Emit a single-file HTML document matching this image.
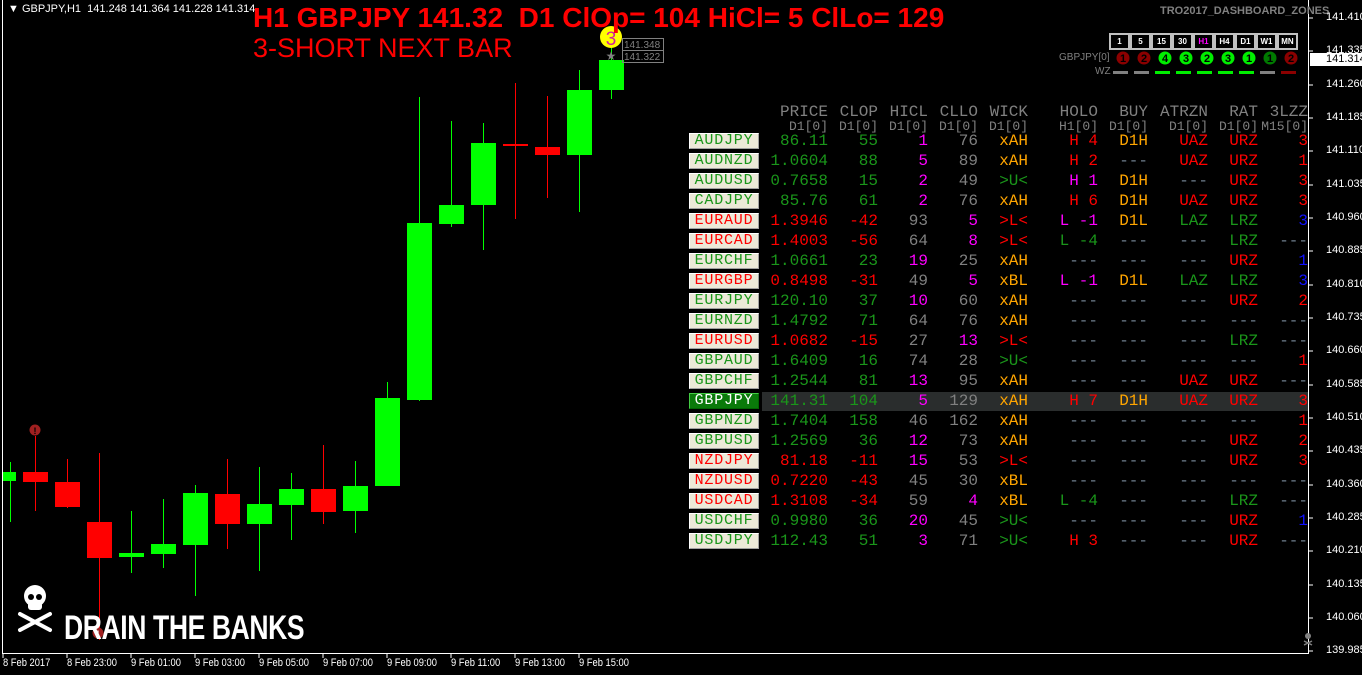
<!DOCTYPE html>
<html><head><meta charset="utf-8"><style>
body{margin:0;background:#000;width:1362px;height:675px;overflow:hidden;position:relative;font-family:"Liberation Sans",sans-serif}
.a{position:absolute;white-space:pre}
.row{position:absolute;left:762px;width:546px;height:20px;font-family:"Liberation Mono",monospace;font-size:16px;line-height:20px}
.row span{position:absolute;top:0;text-align:right;white-space:pre}
.c1{left:0;width:66px}.c2{left:66px;width:50px}.c3{left:116px;width:50px}.c4{left:166px;width:50px}.c5{left:216px;width:50px}.c6{left:266px;width:70px}.c7{left:336px;width:50px}.c8{left:386px;width:60px}.c9{left:446px;width:50px}.c10{left:496px;width:50px}
.btn{position:absolute;left:689px;width:70px;height:16px;background:#ece9d8;border-top:1px solid #fff;border-left:1px solid #fff;border-right:1px solid #a0a0a0;border-bottom:1px solid #a0a0a0;box-sizing:border-box;font-family:"Liberation Mono",monospace;font-size:15px;line-height:14px;text-align:center;letter-spacing:0.8px}
.g{color:#1a961a}.r{color:#ff0000}.m{color:#ff00ff}.k{color:#808080}.o{color:#ffa500}.d{color:#708090}.b{color:#1010ff}
.hd{color:#808080}
.tf{position:absolute;top:33px;width:17px;height:13px;border:2px solid #c0c0c0;background:#000;color:#fff;font-size:8px;font-weight:bold;text-align:center;line-height:13px;box-sizing:content-box}
.ax{position:absolute;left:1326px;font-size:11px;color:#fff;font-family:"Liberation Sans",sans-serif}
.tx{position:absolute;top:657px;font-size:11px;color:#fff;transform:scaleX(0.85);transform-origin:left}
</style></head><body>
<svg class="a" style="left:0;top:0" width="1362" height="675">
<line x1="2.5" y1="0" x2="2.5" y2="653" stroke="#fff"/>
<line x1="2" y1="653.5" x2="1309" y2="653.5" stroke="#fff"/>
<line x1="1308.5" y1="0" x2="1308.5" y2="654" stroke="#fff"/>
<g stroke-width="1">
<line x1="10.5" y1="462" x2="10.5" y2="522" stroke="#0f0"/><rect x="3" y="472" width="13" height="9" fill="#0f0"/>
<line x1="35.5" y1="436" x2="35.5" y2="511" stroke="#f00"/><rect x="23" y="472" width="25" height="10" fill="#f00"/>
<line x1="67.5" y1="459" x2="67.5" y2="508" stroke="#f00"/><rect x="55" y="482" width="25" height="25" fill="#f00"/>
<line x1="99.5" y1="453" x2="99.5" y2="640" stroke="#f00"/><rect x="87" y="522" width="25" height="36" fill="#f00"/>
<line x1="131.5" y1="511" x2="131.5" y2="573" stroke="#0f0"/><rect x="119" y="553" width="25" height="4" fill="#0f0"/>
<line x1="163.5" y1="499" x2="163.5" y2="568" stroke="#0f0"/><rect x="151" y="544" width="25" height="10" fill="#0f0"/>
<line x1="195.5" y1="485" x2="195.5" y2="596" stroke="#0f0"/><rect x="183" y="493" width="25" height="52" fill="#0f0"/>
<line x1="227.5" y1="459" x2="227.5" y2="549" stroke="#f00"/><rect x="215" y="494" width="25" height="30" fill="#f00"/>
<line x1="259.5" y1="467" x2="259.5" y2="571" stroke="#0f0"/><rect x="247" y="504" width="25" height="20" fill="#0f0"/>
<line x1="291.5" y1="473" x2="291.5" y2="540" stroke="#0f0"/><rect x="279" y="489" width="25" height="16" fill="#0f0"/>
<line x1="323.5" y1="445" x2="323.5" y2="524" stroke="#f00"/><rect x="311" y="489" width="25" height="23" fill="#f00"/>
<line x1="355.5" y1="461" x2="355.5" y2="533" stroke="#0f0"/><rect x="343" y="486" width="25" height="25" fill="#0f0"/>
<line x1="387.5" y1="382" x2="387.5" y2="486" stroke="#0f0"/><rect x="375" y="398" width="25" height="88" fill="#0f0"/>
<line x1="419.5" y1="97" x2="419.5" y2="401" stroke="#0f0"/><rect x="407" y="223" width="25" height="177" fill="#0f0"/>
<line x1="451.5" y1="121" x2="451.5" y2="227" stroke="#0f0"/><rect x="439" y="205" width="25" height="19" fill="#0f0"/>
<line x1="483.5" y1="123" x2="483.5" y2="250" stroke="#0f0"/><rect x="471" y="143" width="25" height="62" fill="#0f0"/>
<line x1="515.5" y1="83" x2="515.5" y2="219" stroke="#f00"/><rect x="503" y="144" width="25" height="2" fill="#f00"/>
<line x1="547.5" y1="96" x2="547.5" y2="198" stroke="#f00"/><rect x="535" y="147" width="25" height="8" fill="#f00"/>
<line x1="579.5" y1="70" x2="579.5" y2="212" stroke="#0f0"/><rect x="567" y="90" width="25" height="65" fill="#0f0"/>
<line x1="611.5" y1="48" x2="611.5" y2="99" stroke="#0f0"/><rect x="599" y="60" width="25" height="30" fill="#0f0"/>
</g>
<circle cx="35" cy="430" r="5.5" fill="#a02020"/><text x="35" y="434" font-size="9" fill="#000" text-anchor="middle" font-weight="bold">!</text>
<circle cx="98" cy="633" r="5.5" fill="#a02020"/><text x="98" y="637" font-size="9" fill="#fff" text-anchor="middle">1</text>
<circle cx="611" cy="37" r="11" fill="#ffff00"/><text x="611" y="45" font-size="19" fill="#d020a0" text-anchor="middle">3</text>
<text x="611" y="60" font-size="12" fill="#808080" text-anchor="middle">★</text>
<rect x="622.5" y="38.5" width="41" height="12" fill="none" stroke="#808080"/><rect x="622.5" y="50.5" width="41" height="12" fill="none" stroke="#808080"/>
<text x="624" y="48" font-size="10" fill="#808080">141.348</text><text x="624" y="60" font-size="10" fill="#808080">141.322</text>
<g stroke="#fff">
<line x1="1309" y1="18" x2="1313" y2="18"/><line x1="1309" y1="51" x2="1313" y2="51"/><line x1="1309" y1="85" x2="1313" y2="85"/><line x1="1309" y1="118" x2="1313" y2="118"/><line x1="1309" y1="151" x2="1313" y2="151"/><line x1="1309" y1="185" x2="1313" y2="185"/><line x1="1309" y1="218" x2="1313" y2="218"/><line x1="1309" y1="251" x2="1313" y2="251"/><line x1="1309" y1="285" x2="1313" y2="285"/><line x1="1309" y1="318" x2="1313" y2="318"/><line x1="1309" y1="351" x2="1313" y2="351"/><line x1="1309" y1="385" x2="1313" y2="385"/><line x1="1309" y1="418" x2="1313" y2="418"/><line x1="1309" y1="451" x2="1313" y2="451"/><line x1="1309" y1="485" x2="1313" y2="485"/><line x1="1309" y1="518" x2="1313" y2="518"/><line x1="1309" y1="551" x2="1313" y2="551"/><line x1="1309" y1="585" x2="1313" y2="585"/><line x1="1309" y1="618" x2="1313" y2="618"/><line x1="1309" y1="651" x2="1313" y2="651"/>
<line x1="3" y1="654" x2="3" y2="658"/><line x1="67" y1="654" x2="67" y2="658"/><line x1="131" y1="654" x2="131" y2="658"/><line x1="195" y1="654" x2="195" y2="658"/><line x1="259" y1="654" x2="259" y2="658"/><line x1="323" y1="654" x2="323" y2="658"/><line x1="387" y1="654" x2="387" y2="658"/><line x1="451" y1="654" x2="451" y2="658"/><line x1="515" y1="654" x2="515" y2="658"/><line x1="579" y1="654" x2="579" y2="658"/>
</g>
<rect x="1310" y="53" width="52" height="13" fill="#fff"/>
<g fill="#fff">
<ellipse cx="35" cy="596" rx="11" ry="11"/><rect x="28" y="602" width="14" height="8" rx="3"/>
<g stroke="#fff" stroke-width="4" stroke-linecap="round"><line x1="20" y1="614" x2="50" y2="630"/><line x1="50" y1="614" x2="20" y2="630"/></g>
</g>
<circle cx="31" cy="597" r="3" fill="#000"/><circle cx="39" cy="597" r="3" fill="#000"/>
<circle cx="1308" cy="636" r="3" fill="#808080"/><path d="M1304 641 L1312 645 M1312 641 L1304 645" stroke="#808080" stroke-width="1.5"/>
<g font-size="11" text-anchor="middle" font-weight="bold">
<circle cx="1123" cy="58" r="6.5" fill="#8b0000"/><text x="1123" y="62" fill="#000">1</text>
<circle cx="1144" cy="58" r="6.5" fill="#8b0000"/><text x="1144" y="62" fill="#000">2</text>
<circle cx="1165" cy="58" r="6.5" fill="#00ee00"/><text x="1165" y="62" fill="#000">4</text>
<circle cx="1186" cy="58" r="6.5" fill="#00ee00"/><text x="1186" y="62" fill="#000">3</text>
<circle cx="1207" cy="58" r="6.5" fill="#00ee00"/><text x="1207" y="62" fill="#000">2</text>
<circle cx="1228" cy="58" r="6.5" fill="#00ee00"/><text x="1228" y="62" fill="#000">3</text>
<circle cx="1249" cy="58" r="6.5" fill="#00ee00"/><text x="1249" y="62" fill="#000">1</text>
<circle cx="1270" cy="58" r="6.5" fill="#007a00"/><text x="1270" y="62" fill="#000">1</text>
<circle cx="1291" cy="58" r="6.5" fill="#8b0000"/><text x="1291" y="62" fill="#000">2</text>
</g>
<g>
<rect x="1113" y="71" width="15" height="3" fill="#808080"/><rect x="1134" y="71" width="15" height="3" fill="#808080"/><rect x="1155" y="71" width="15" height="3" fill="#00ee00"/><rect x="1176" y="71" width="15" height="3" fill="#00ee00"/><rect x="1197" y="71" width="15" height="3" fill="#00ee00"/><rect x="1218" y="71" width="15" height="3" fill="#00ee00"/><rect x="1239" y="71" width="15" height="3" fill="#00ee00"/><rect x="1260" y="71" width="15" height="3" fill="#808080"/><rect x="1281" y="71" width="15" height="3" fill="#8b0000"/>
</g>
</svg>

<div class="a" style="left:8px;top:3px;font-size:11px;color:#fff">▼ GBPJPY,H1  141.248 141.364 141.228 141.314</div>
<div class="a" style="left:253px;top:2px;font-size:28px;font-weight:bold;color:#ff0000">H1 GBPJPY 141.32  D1 ClOp= 104 HiCl= 5 ClLo= 129</div>
<div class="a" style="left:253px;top:33px;font-size:27px;color:#ff0000">3-SHORT NEXT BAR</div>
<div class="a" style="left:64px;top:609px;font-size:34px;font-weight:bold;color:#fff;transform:scaleX(0.78);transform-origin:left;letter-spacing:-0.5px">DRAIN THE BANKS</div>
<div class="a" style="left:1160px;top:5px;font-size:11px;font-weight:bold;color:#808080">TRO2017_DASHBOARD_ZONES</div>
<div class="a" style="left:1059px;top:52px;font-size:10px;color:#808080">GBPJPY[0]</div>
<div class="a" style="left:1095px;top:66px;font-size:10px;color:#808080">WZ</div>

<div class="tf" style="left:1109px">1</div><div class="tf" style="left:1130px">5</div><div class="tf" style="left:1151px">15</div><div class="tf" style="left:1172px">30</div><div class="tf" style="left:1193px;color:#ff00ff">H1</div><div class="tf" style="left:1214px">H4</div><div class="tf" style="left:1235px">D1</div><div class="tf" style="left:1256px">W1</div><div class="tf" style="left:1277px">MN</div>

<div class="ax" style="top:11px">141.410</div><div class="ax" style="top:44px">141.335</div><div class="ax" style="top:53px;color:#000">141.314</div><div class="ax" style="top:78px">141.260</div><div class="ax" style="top:111px">141.185</div><div class="ax" style="top:144px">141.110</div><div class="ax" style="top:178px">141.035</div><div class="ax" style="top:211px">140.960</div><div class="ax" style="top:244px">140.885</div><div class="ax" style="top:278px">140.810</div><div class="ax" style="top:311px">140.735</div><div class="ax" style="top:344px">140.660</div><div class="ax" style="top:378px">140.585</div><div class="ax" style="top:411px">140.510</div><div class="ax" style="top:444px">140.435</div><div class="ax" style="top:478px">140.360</div><div class="ax" style="top:511px">140.285</div><div class="ax" style="top:544px">140.210</div><div class="ax" style="top:578px">140.135</div><div class="ax" style="top:611px">140.060</div><div class="ax" style="top:644px">139.985</div>

<div class="tx" style="left:3px">8 Feb 2017</div><div class="tx" style="left:67px">8 Feb 23:00</div><div class="tx" style="left:131px">9 Feb 01:00</div><div class="tx" style="left:195px">9 Feb 03:00</div><div class="tx" style="left:259px">9 Feb 05:00</div><div class="tx" style="left:323px">9 Feb 07:00</div><div class="tx" style="left:387px">9 Feb 09:00</div><div class="tx" style="left:451px">9 Feb 11:00</div><div class="tx" style="left:515px">9 Feb 13:00</div><div class="tx" style="left:579px">9 Feb 15:00</div>

<div class="row hd" style="top:102px"><span class="c1">PRICE</span><span class="c2">CLOP</span><span class="c3">HICL</span><span class="c4">CLLO</span><span class="c5">WICK</span><span class="c6">HOLO</span><span class="c7">BUY</span><span class="c8">ATRZN</span><span class="c9">RAT</span><span class="c10">3LZZ</span></div>
<div class="row hd" style="top:117px;font-size:13px"><span class="c1">D1[0]</span><span class="c2">D1[0]</span><span class="c3">D1[0]</span><span class="c4">D1[0]</span><span class="c5">D1[0]</span><span class="c6">H1[0]</span><span class="c7">D1[0]</span><span class="c8">D1[0]</span><span class="c9">D1[0]</span><span class="c10">M15[0]</span></div>

<div style="position:absolute;left:762px;top:392px;width:546px;height:19px;background:#2a2d2d"></div>

<div class="btn g" style="top:133px">AUDJPY</div><div class="row" style="top:131px"><span class="c1 g">86.11</span><span class="c2 g">55</span><span class="c3 m">1</span><span class="c4 k">76</span><span class="c5 o">xAH</span><span class="c6 r">H 4</span><span class="c7 o">D1H</span><span class="c8 r">UAZ</span><span class="c9 r">URZ</span><span class="c10 r">3</span></div>
<div class="btn g" style="top:153px">AUDNZD</div><div class="row" style="top:151px"><span class="c1 g">1.0604</span><span class="c2 g">88</span><span class="c3 m">5</span><span class="c4 k">89</span><span class="c5 o">xAH</span><span class="c6 r">H 2</span><span class="c7 d">---</span><span class="c8 r">UAZ</span><span class="c9 r">URZ</span><span class="c10 r">1</span></div>
<div class="btn g" style="top:173px">AUDUSD</div><div class="row" style="top:171px"><span class="c1 g">0.7658</span><span class="c2 g">15</span><span class="c3 m">2</span><span class="c4 k">49</span><span class="c5 g">&gt;U&lt;</span><span class="c6 m">H 1</span><span class="c7 o">D1H</span><span class="c8 d">---</span><span class="c9 r">URZ</span><span class="c10 r">3</span></div>
<div class="btn g" style="top:193px">CADJPY</div><div class="row" style="top:191px"><span class="c1 g">85.76</span><span class="c2 g">61</span><span class="c3 m">2</span><span class="c4 k">76</span><span class="c5 o">xAH</span><span class="c6 r">H 6</span><span class="c7 o">D1H</span><span class="c8 r">UAZ</span><span class="c9 r">URZ</span><span class="c10 r">3</span></div>
<div class="btn r" style="top:213px">EURAUD</div><div class="row" style="top:211px"><span class="c1 r">1.3946</span><span class="c2 r">-42</span><span class="c3 k">93</span><span class="c4 m">5</span><span class="c5 r">&gt;L&lt;</span><span class="c6 m">L -1</span><span class="c7 o">D1L</span><span class="c8 g">LAZ</span><span class="c9 g">LRZ</span><span class="c10 b">3</span></div>
<div class="btn r" style="top:233px">EURCAD</div><div class="row" style="top:231px"><span class="c1 r">1.4003</span><span class="c2 r">-56</span><span class="c3 k">64</span><span class="c4 m">8</span><span class="c5 r">&gt;L&lt;</span><span class="c6 g">L -4</span><span class="c7 d">---</span><span class="c8 d">---</span><span class="c9 g">LRZ</span><span class="c10 d">---</span></div>
<div class="btn g" style="top:253px">EURCHF</div><div class="row" style="top:251px"><span class="c1 g">1.0661</span><span class="c2 g">23</span><span class="c3 m">19</span><span class="c4 k">25</span><span class="c5 o">xAH</span><span class="c6 d">---</span><span class="c7 d">---</span><span class="c8 d">---</span><span class="c9 r">URZ</span><span class="c10 b">1</span></div>
<div class="btn r" style="top:273px">EURGBP</div><div class="row" style="top:271px"><span class="c1 r">0.8498</span><span class="c2 r">-31</span><span class="c3 k">49</span><span class="c4 m">5</span><span class="c5 o">xBL</span><span class="c6 m">L -1</span><span class="c7 o">D1L</span><span class="c8 g">LAZ</span><span class="c9 g">LRZ</span><span class="c10 b">3</span></div>
<div class="btn g" style="top:293px">EURJPY</div><div class="row" style="top:291px"><span class="c1 g">120.10</span><span class="c2 g">37</span><span class="c3 m">10</span><span class="c4 k">60</span><span class="c5 o">xAH</span><span class="c6 d">---</span><span class="c7 d">---</span><span class="c8 d">---</span><span class="c9 r">URZ</span><span class="c10 r">2</span></div>
<div class="btn g" style="top:313px">EURNZD</div><div class="row" style="top:311px"><span class="c1 g">1.4792</span><span class="c2 g">71</span><span class="c3 k">64</span><span class="c4 k">76</span><span class="c5 o">xAH</span><span class="c6 d">---</span><span class="c7 d">---</span><span class="c8 d">---</span><span class="c9 d">---</span><span class="c10 d">---</span></div>
<div class="btn r" style="top:333px">EURUSD</div><div class="row" style="top:331px"><span class="c1 r">1.0682</span><span class="c2 r">-15</span><span class="c3 k">27</span><span class="c4 m">13</span><span class="c5 r">&gt;L&lt;</span><span class="c6 d">---</span><span class="c7 d">---</span><span class="c8 d">---</span><span class="c9 g">LRZ</span><span class="c10 d">---</span></div>
<div class="btn g" style="top:353px">GBPAUD</div><div class="row" style="top:351px"><span class="c1 g">1.6409</span><span class="c2 g">16</span><span class="c3 k">74</span><span class="c4 k">28</span><span class="c5 g">&gt;U&lt;</span><span class="c6 d">---</span><span class="c7 d">---</span><span class="c8 d">---</span><span class="c9 d">---</span><span class="c10 r">1</span></div>
<div class="btn g" style="top:373px">GBPCHF</div><div class="row" style="top:371px"><span class="c1 g">1.2544</span><span class="c2 g">81</span><span class="c3 m">13</span><span class="c4 k">95</span><span class="c5 o">xAH</span><span class="c6 d">---</span><span class="c7 d">---</span><span class="c8 r">UAZ</span><span class="c9 r">URZ</span><span class="c10 d">---</span></div>
<div class="btn" style="top:393px;background:#0a7a0a;color:#fff;border-color:#4c4 #060 #060 #4c4">GBPJPY</div><div class="row" style="top:391px"><span class="c1 g">141.31</span><span class="c2 g">104</span><span class="c3 m">5</span><span class="c4 k">129</span><span class="c5 o">xAH</span><span class="c6 r">H 7</span><span class="c7 o">D1H</span><span class="c8 r">UAZ</span><span class="c9 r">URZ</span><span class="c10 r">3</span></div>
<div class="btn g" style="top:413px">GBPNZD</div><div class="row" style="top:411px"><span class="c1 g">1.7404</span><span class="c2 g">158</span><span class="c3 k">46</span><span class="c4 k">162</span><span class="c5 o">xAH</span><span class="c6 d">---</span><span class="c7 d">---</span><span class="c8 d">---</span><span class="c9 d">---</span><span class="c10 r">1</span></div>
<div class="btn g" style="top:433px">GBPUSD</div><div class="row" style="top:431px"><span class="c1 g">1.2569</span><span class="c2 g">36</span><span class="c3 m">12</span><span class="c4 k">73</span><span class="c5 o">xAH</span><span class="c6 d">---</span><span class="c7 d">---</span><span class="c8 d">---</span><span class="c9 r">URZ</span><span class="c10 r">2</span></div>
<div class="btn r" style="top:453px">NZDJPY</div><div class="row" style="top:451px"><span class="c1 r">81.18</span><span class="c2 r">-11</span><span class="c3 m">15</span><span class="c4 k">53</span><span class="c5 r">&gt;L&lt;</span><span class="c6 d">---</span><span class="c7 d">---</span><span class="c8 d">---</span><span class="c9 r">URZ</span><span class="c10 r">3</span></div>
<div class="btn r" style="top:473px">NZDUSD</div><div class="row" style="top:471px"><span class="c1 r">0.7220</span><span class="c2 r">-43</span><span class="c3 k">45</span><span class="c4 k">30</span><span class="c5 o">xBL</span><span class="c6 d">---</span><span class="c7 d">---</span><span class="c8 d">---</span><span class="c9 d">---</span><span class="c10 d">---</span></div>
<div class="btn r" style="top:493px">USDCAD</div><div class="row" style="top:491px"><span class="c1 r">1.3108</span><span class="c2 r">-34</span><span class="c3 k">59</span><span class="c4 m">4</span><span class="c5 o">xBL</span><span class="c6 g">L -4</span><span class="c7 d">---</span><span class="c8 d">---</span><span class="c9 g">LRZ</span><span class="c10 d">---</span></div>
<div class="btn g" style="top:513px">USDCHF</div><div class="row" style="top:511px"><span class="c1 g">0.9980</span><span class="c2 g">36</span><span class="c3 m">20</span><span class="c4 k">45</span><span class="c5 g">&gt;U&lt;</span><span class="c6 d">---</span><span class="c7 d">---</span><span class="c8 d">---</span><span class="c9 r">URZ</span><span class="c10 b">1</span></div>
<div class="btn g" style="top:533px">USDJPY</div><div class="row" style="top:531px"><span class="c1 g">112.43</span><span class="c2 g">51</span><span class="c3 m">3</span><span class="c4 k">71</span><span class="c5 g">&gt;U&lt;</span><span class="c6 r">H 3</span><span class="c7 d">---</span><span class="c8 d">---</span><span class="c9 r">URZ</span><span class="c10 d">---</span></div>
</body></html>
